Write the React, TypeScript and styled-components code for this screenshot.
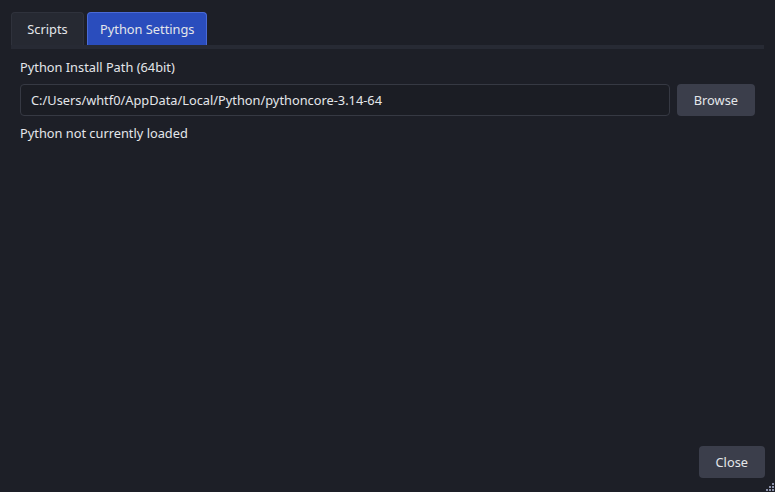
import { useState } from 'react'
import styled, { createGlobalStyle } from 'styled-components'

const GlobalStyle = createGlobalStyle`
  html, body {
    margin: 0;
    padding: 0;
    background: #1d1f27;
  }
  * {
    box-sizing: border-box;
  }
`

const Window = styled.div`
  width: 100vw;
  height: 100vh;
  background: #1d1f27;
  display: flex;
  flex-direction: column;
  padding: 12px 11px 14px 11px;
  font-family: 'Noto Sans', 'Open Sans', sans-serif;
  font-size: 12.8px;
  color: #e4e6ea;
  position: relative;
  overflow: hidden;
`

const TabBar = styled.div`
  display: flex;
  gap: 3px;
  border-bottom: 4px solid #272a34;
`

const Tab = styled.button<{ $active?: boolean }>`
  height: 33px;
  min-width: 73px;
  padding: 0 12px;
  border: 1px solid ${(p) => (p.$active ? '#4a6ad6' : '#2f323c')};
  border-bottom: none;
  border-radius: 4px 4px 0 0;
  background: ${(p) => (p.$active ? '#2a4dbd' : '#262932')};
  color: #e4e6ea;
  font-family: inherit;
  font-size: inherit;
  cursor: pointer;
`

const Content = styled.div`
  flex: 1;
  display: flex;
  flex-direction: column;
  padding: 9px 9px 0 9px;
`

const Label = styled.div`
  line-height: 18px;
  margin-bottom: 8px;
`

const PathRow = styled.div`
  display: flex;
  gap: 7px;
`

const PathInput = styled.input`
  flex: 1;
  height: 32px;
  padding: 0 10px;
  background: #1b1d24;
  border: 1px solid #363943;
  border-radius: 4px;
  color: #e4e6ea;
  font-family: inherit;
  font-size: inherit;
  outline: none;
`

const Button = styled.button`
  height: 32px;
  padding: 0 17px;
  background: #3b3e4b;
  border: none;
  border-radius: 4px;
  color: #e4e6ea;
  font-family: inherit;
  font-size: inherit;
  cursor: pointer;
`

const Status = styled.div`
  margin-top: 8px;
  line-height: 18px;
`

const Footer = styled.div`
  display: flex;
  justify-content: flex-end;
  margin-right: -1px;
`

const Grip = styled.svg`
  position: absolute;
  right: 1px;
  bottom: 1px;
`

export default function App() {
  const [tab, setTab] = useState('python')
  const [path, setPath] = useState('C:/Users/whtf0/AppData/Local/Python/pythoncore-3.14-64')

  return (
    <>
      <GlobalStyle />
      <Window>
        <TabBar>
          <Tab $active={tab === 'scripts'} onClick={() => setTab('scripts')}>Scripts</Tab>
          <Tab $active={tab === 'python'} onClick={() => setTab('python')}>Python Settings</Tab>
        </TabBar>
        <Content>
          <Label>Python Install Path (64bit)</Label>
          <PathRow>
            <PathInput value={path} onChange={(e) => setPath(e.target.value)} />
            <Button>Browse</Button>
          </PathRow>
          <Status>Python not currently loaded</Status>
        </Content>
        <Footer>
          <Button>Close</Button>
        </Footer>
        <Grip width="8" height="8" viewBox="0 0 8 8">
          <rect x="6" y="0" width="2" height="2" fill="#8a90a8" />
          <rect x="3" y="3" width="2" height="2" fill="#8a90a8" />
          <rect x="6" y="3" width="2" height="2" fill="#8a90a8" />
          <rect x="0" y="6" width="2" height="2" fill="#8a90a8" />
          <rect x="3" y="6" width="2" height="2" fill="#8a90a8" />
          <rect x="6" y="6" width="2" height="2" fill="#8a90a8" />
        </Grip>
      </Window>
    </>
  )
}
